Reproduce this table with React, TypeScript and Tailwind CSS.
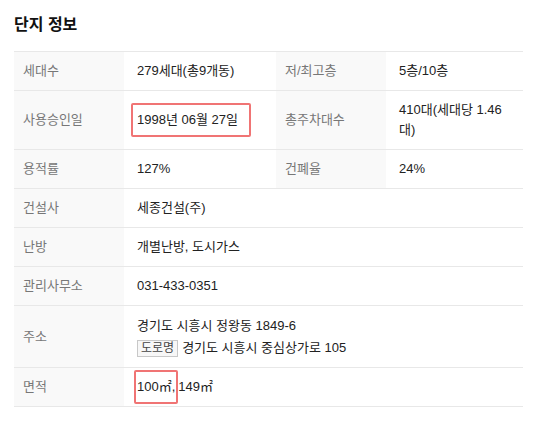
const font = { fontFamily: '"Liberation Sans", "Noto Sans CJK KR", sans-serif' };

function Label({ children }: { children: React.ReactNode }) {
  return (
    <div className="bg-[#f9f9f9] pl-[9px] text-[#777] flex items-center">{children}</div>
  );
}

function Value({ children, wide }: { children: React.ReactNode; wide?: boolean }) {
  return (
    <div className={`pl-[13px] pr-3 py-[9px] text-[#222] flex items-center ${wide ? "col-span-3" : ""}`}>
      {children}
    </div>
  );
}

function Row({ children }: { children: React.ReactNode }) {
  return (
    <div className="grid grid-cols-[110px_152px_110px_137px] border-b border-[#e8e8e8] leading-[20px]">
      {children}
    </div>
  );
}

export default function App() {
  return (
    <div className="w-[534px] h-[422px] bg-white pl-[14px] pt-[14px] text-[13px]" style={font}>
      <h2 className="text-[16px] font-bold text-[#111] leading-[22px]">단지 정보</h2>
      <div className="mt-[15px] w-[509px] border-t border-[#e8e8e8]">
        <Row>
          <Label>세대수</Label>
          <Value>279세대(총9개동)</Value>
          <Label>저/최고층</Label>
          <Value>5층/10층</Value>
        </Row>
        <Row>
          <Label>사용승인일</Label>
          <Value>
            <span className="relative">
              1998년 06월 27일
              <span className="absolute -left-[6px] -right-[13px] -top-[7px] -bottom-[7px] border-2 border-[#f07474] rounded-[2px]" />
            </span>
          </Value>
          <Label>총주차대수</Label>
          <Value>410대(세대당 1.46 대)</Value>
        </Row>
        <Row>
          <Label>용적률</Label>
          <Value>127%</Value>
          <Label>건폐율</Label>
          <Value>24%</Value>
        </Row>
        <Row>
          <Label>건설사</Label>
          <Value wide>세종건설(주)</Value>
        </Row>
        <Row>
          <Label>난방</Label>
          <Value wide>개별난방, 도시가스</Value>
        </Row>
        <Row>
          <Label>관리사무소</Label>
          <Value wide>031-433-0351</Value>
        </Row>
        <Row>
          <Label>주소</Label>
          <Value wide>
            <div className="flex flex-col gap-[2px] pt-[1px]">
              <span>경기도 시흥시 정왕동 1849-6</span>
              <span className="flex items-center">
                <span className="inline-flex items-center h-[17px] px-[3px] mr-[4px] border border-[#c8c8c8] bg-[#f7f7f7] text-[#444] text-[12px] leading-none">도로명</span>
                경기도 시흥시 중심상가로 105
              </span>
            </div>
          </Value>
        </Row>
        <Row>
          <Label>면적</Label>
          <Value wide>
            <span className="relative">
              100㎡,
              <span className="absolute -left-[3px] -right-[3px] -top-[7px] -bottom-[7px] border-2 border-[#f07474] rounded-[2px]" />
            </span>
            <span className="ml-[3px]">149㎡</span>
          </Value>
        </Row>
      </div>
    </div>
  );
}
